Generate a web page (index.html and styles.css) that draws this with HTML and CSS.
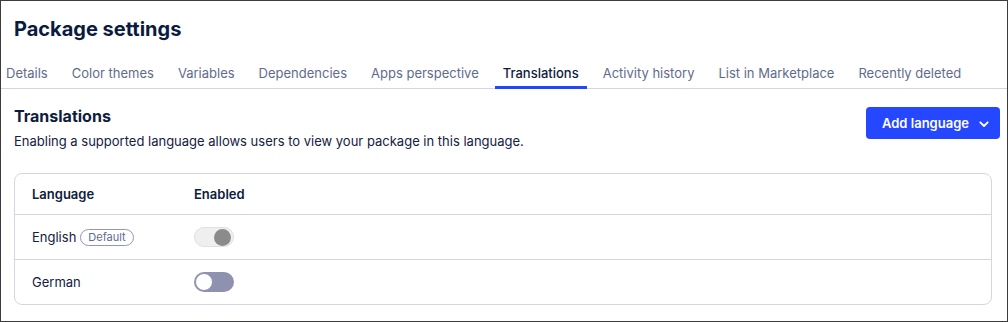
FILE: index.html
```html
<!DOCTYPE html>
<html>
<head>
<meta charset="utf-8">
<link rel="stylesheet" href="styles.css">
</head>
<body>
<div class="frame">
  <h1 class="page-title">Package settings</h1>
  <nav class="tabs">
    <a class="tab">Details</a>
    <a class="tab">Color themes</a>
    <a class="tab">Variables</a>
    <a class="tab">Dependencies</a>
    <a class="tab">Apps perspective</a>
    <a class="tab active">Translations</a>
    <a class="tab">Activity history</a>
    <a class="tab">List in Marketplace</a>
    <a class="tab">Recently deleted</a>
  </nav>
  <section class="section">
    <div class="section-head">
      <div>
        <h2 class="section-title">Translations</h2>
        <p class="section-desc">Enabling a supported language allows users to view your package in this language.</p>
      </div>
      <button class="btn-primary">Add language
        <svg class="chev" width="12" height="12" viewBox="0 0 12 12"><path d="M2.3 4.3 6 8l3.7-3.7" fill="none" stroke="#fff" stroke-width="1.8" stroke-linecap="round" stroke-linejoin="round"/></svg>
      </button>
    </div>
    <div class="card">
      <div class="row head">
        <div class="col-lang">Language</div>
        <div class="col-en">Enabled</div>
      </div>
      <div class="row">
        <div class="col-lang">English <span class="badge">Default</span></div>
        <div class="col-en"><span class="toggle disabled on"><span class="knob"></span></span></div>
      </div>
      <div class="row">
        <div class="col-lang">German</div>
        <div class="col-en"><span class="toggle off"><span class="knob"></span></span></div>
      </div>
    </div>
  </section>
</div>
</body>
</html>
```
FILE: styles.css
```css
* { box-sizing: border-box; }
html, body { margin: 0; padding: 0; }
body {
  font-family: Inter, "Noto Sans", sans-serif;
  color: #0e1c3d;
  background: #fff;
}
.frame {
  width: 1008px;
  height: 322px;
  border: 1px solid #3c3c3c;
  overflow: hidden;
}
.page-title {
  margin: 0;
  padding: 15px 0 0 13px;
  font-size: 20px;
  line-height: 26px;
  font-weight: 700;
  color: #0b1b3f;
}
.tabs {
  display: flex;
  gap: 8px;
  margin: 16px 0 0 -3px;
  padding-left: 0;
  border-bottom: 1px solid #d6d6e2;
}
.tab {
  padding: 6px 8px 0;
  font-size: 13px;
  line-height: 18px;
  height: 31px;
  color: #5f6b8c;
  border-bottom: 3px solid transparent;
  margin-bottom: -1px;
  white-space: nowrap;
}
.tab.active {
  color: #0e1c3d;
  font-weight: 500;
  border-bottom-color: #1f47ff;
}
.section {
  padding: 17px 7px 0 13px;
}
.section-head {
  display: flex;
  justify-content: space-between;
  align-items: flex-start;
}
.section-title {
  margin: 0;
  font-size: 16px;
  line-height: 20px;
  font-weight: 700;
  color: #0e1c3d;
}
.section-desc {
  margin: 6px 0 0;
  font-size: 13px;
  line-height: 18px;
  color: #14213f;
}
.btn-primary {
  display: flex;
  align-items: center;
  gap: 9px;
  height: 32px;
  width: 134px;
  margin-top: 1px;
  padding: 0 0 0 16px;
  background: #2447ff;
  border: none;
  border-radius: 4px;
  color: #fff;
  font-family: inherit;
  font-size: 13px;
  font-weight: 600;
}
.chev { margin-top: 1px; }
.card {
  margin-top: 23px;
  width: 978px;
  border: 1px solid #d6d6e2;
  border-radius: 8px;
}
.row {
  display: flex;
  align-items: center;
  height: 45px;
  padding-left: 17px;
  font-size: 13px;
  color: #14213f;
  border-top: 1px solid #d6d6e2;
}
.row.head {
  border-top: none;
  height: 40px;
  font-weight: 600;
  color: #0e1c3d;
}
.col-lang { width: 162px; display: flex; align-items: center; gap: 4px; }
.badge {
  display: inline-flex;
  align-items: center;
  height: 17px;
  padding: 0 7px;
  border: 1px solid #9396b4;
  border-radius: 9px;
  font-size: 11px;
  color: #5f6b8c;
}
.toggle {
  display: flex;
  align-items: center;
  width: 40px;
  height: 20px;
  border-radius: 10px;
  padding: 0 2px;
}
.toggle .knob {
  width: 16px;
  height: 16px;
  border-radius: 50%;
}
.toggle.disabled {
  background: #efefef;
  border: 1px solid #e0e0e4;
  justify-content: flex-end;
}
.toggle.disabled .knob { background: #8b8b8b; width: 17px; height: 17px; }
.toggle.off {
  background: #8f91b1;
  justify-content: flex-start;
  padding: 0 1px;
}
.toggle.off .knob {
  background: #fff;
  width: 18px;
  height: 18px;
  border: 1px solid #8f91b1;
}
```
